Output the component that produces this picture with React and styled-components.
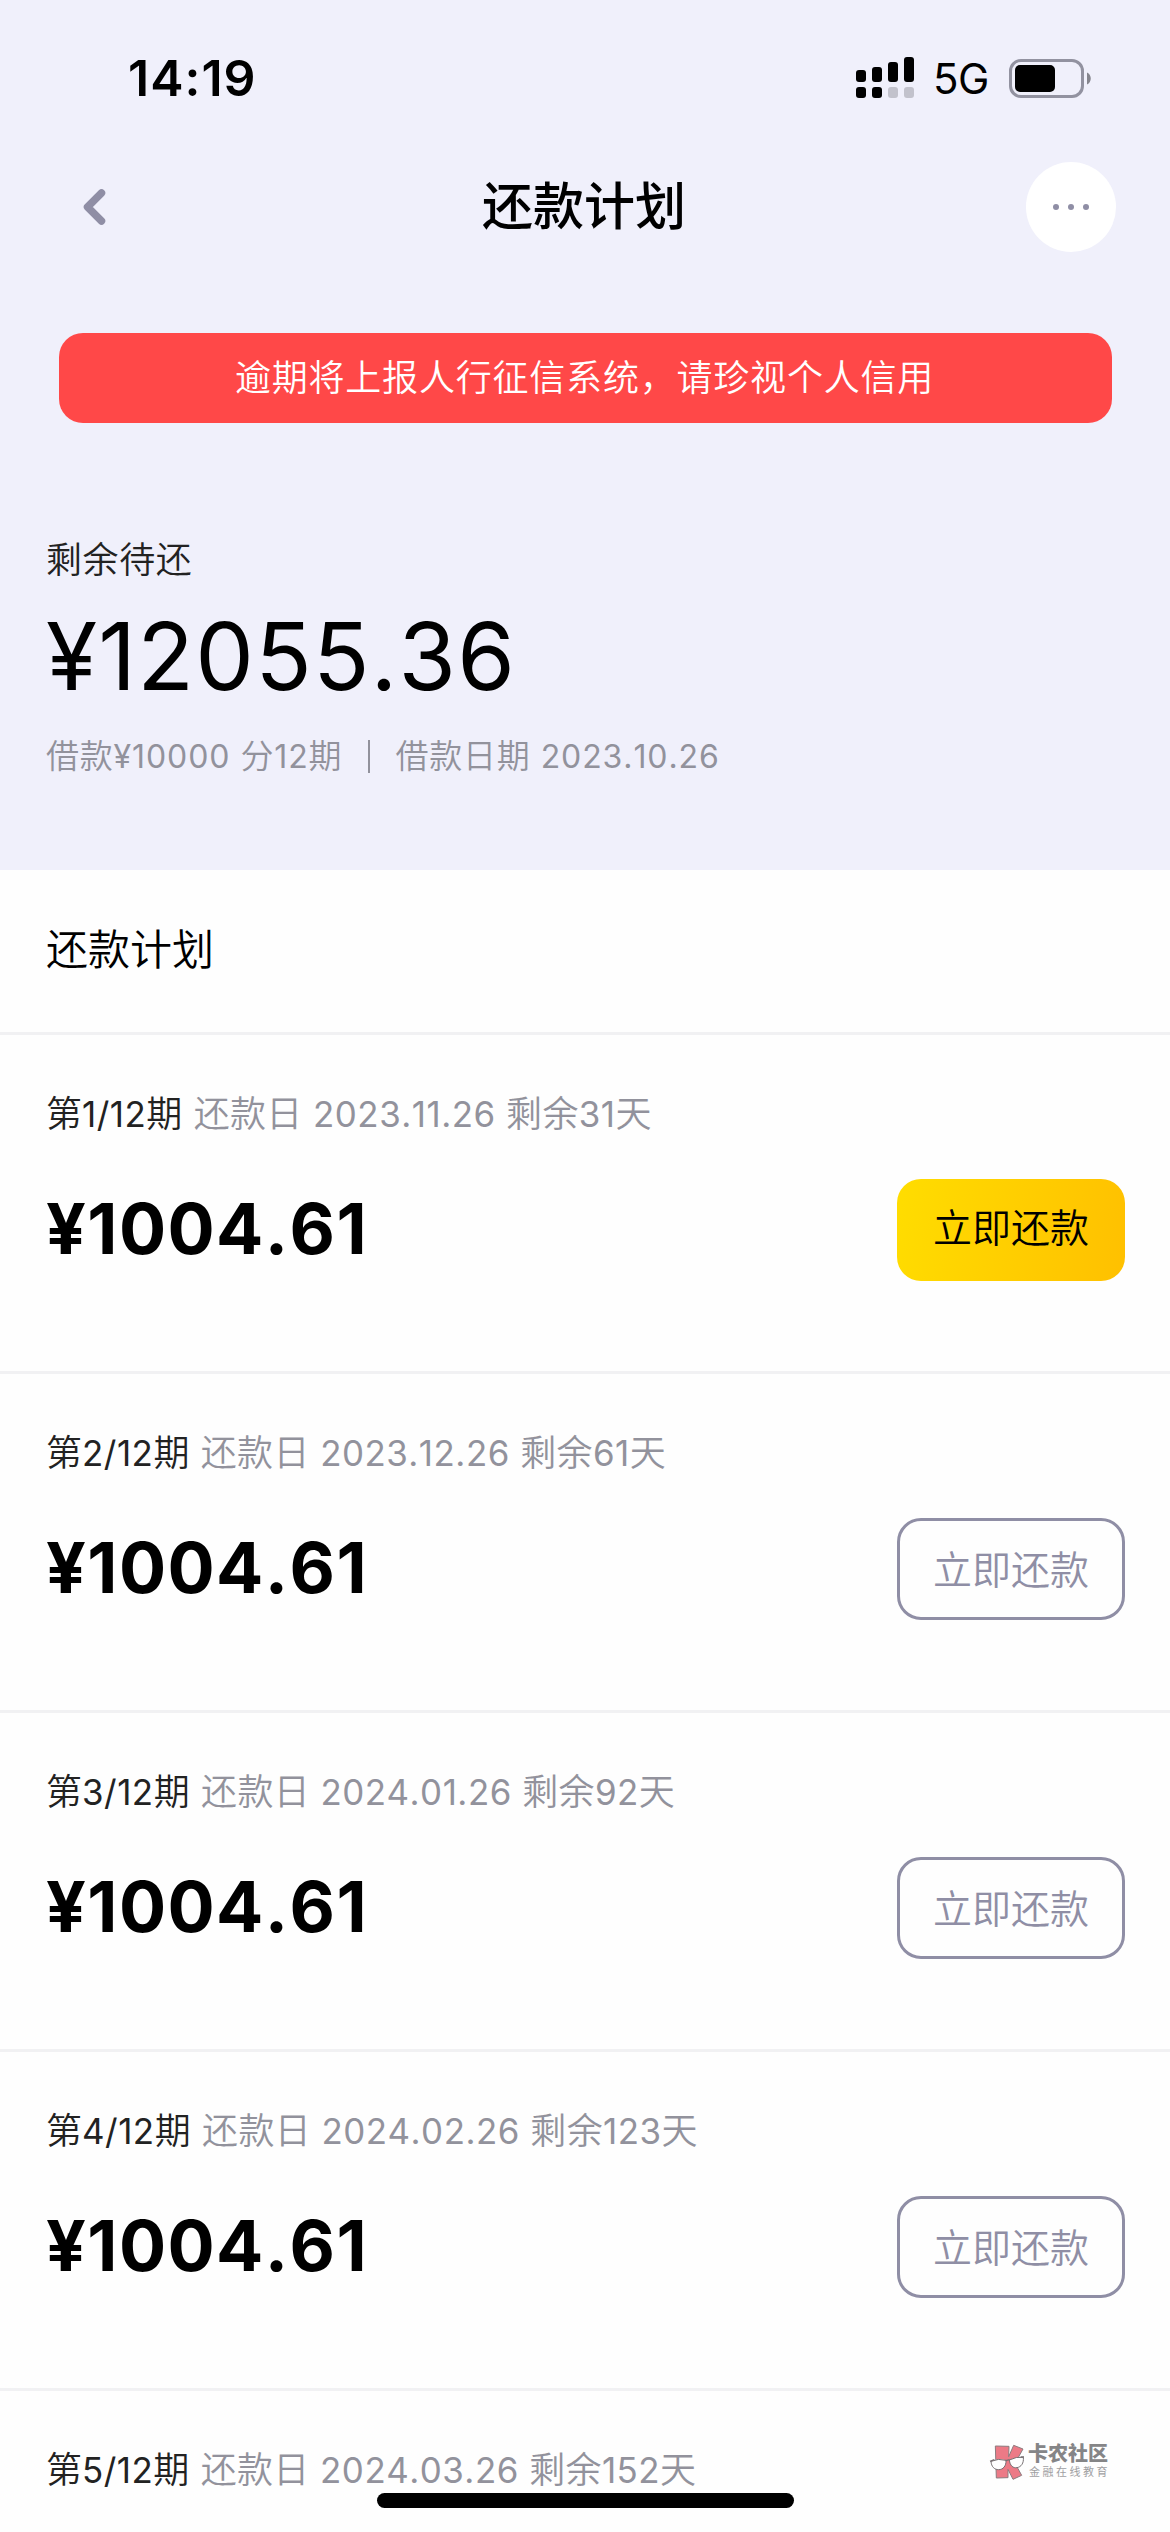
import React from "react";
import styled, { createGlobalStyle, css } from "styled-components";

const GlobalStyle = createGlobalStyle`
  * {
    box-sizing: border-box;
  }
  body {
    margin: 0;
    background: #fff;
    font-family: Inter, "Noto Sans CJK SC", sans-serif;
    font-kerning: none;
    color: #000;
  }
`;

const Screen = styled.div`
  position: relative;
  width: 1170px;
  height: 2532px;
  overflow: hidden;
  background: #fefefe;
`;

const TopArea = styled.div`
  height: 870px;
  background: #f0f0fb;
`;

const StatusBar = styled.div`
  display: flex;
  justify-content: space-between;
  align-items: center;
  height: 156px;
  padding: 0 78px 0 128px;
`;

const Time = styled.div`
  font-size: 50px;
  font-weight: 600;
  line-height: 60px;
  letter-spacing: 1px;
`;

const StatusIcons = styled.div`
  display: flex;
  align-items: center;
`;

const Network = styled.div`
  width: 95px;
  padding: 2px 0 0 19px;
  font-size: 42px;
  font-weight: 400;
  line-height: 50px;
  letter-spacing: -0.5px;
`;

const NavBar = styled.div`
  display: flex;
  justify-content: space-between;
  align-items: center;
  height: 102px;
  padding: 0 54px 0 80px;
`;

const NavSide = styled.div`
  display: flex;
  width: 120px;
  justify-content: ${(props) => (props.$end ? "flex-end" : "flex-start")};
`;

const NavTitle = styled.h1`
  margin: 0 28px 0 0;
  font-size: 51px;
  font-weight: 500;
  line-height: 60px;
`;

const MoreButton = styled.div`
  display: flex;
  justify-content: center;
  align-items: center;
  gap: 9px;
  width: 90px;
  height: 90px;
  border-radius: 50%;
  background: #fff;
`;

const Dot = styled.span`
  width: 6px;
  height: 6px;
  border-radius: 50%;
  background: #8f8ea5;
`;

const Notice = styled.div`
  display: flex;
  justify-content: center;
  align-items: center;
  width: 1053px;
  height: 90px;
  margin: 75px 0 0 59px;
  padding: 0 2px 6px 0;
  border-radius: 24px;
  background: #ff4848;
  color: #fff;
  font-size: 36px;
  font-weight: 350;
  letter-spacing: 0.8px;
`;

// digits sit a touch smaller and heavier than the chinese text around them
const Num = styled.span`
  font-size: 0.97em;
  font-weight: 400;
  letter-spacing: 0.5px;
`;

const Summary = styled.div`
  padding: 110px 46px 0;
`;

const SummaryLabel = styled.div`
  font-size: 36px;
  line-height: 54px;
  letter-spacing: 0.6px;
  font-weight: 350;
  color: #222;
`;

const SummaryAmount = styled.div`
  margin-top: 10px;
  font-size: 93px;
  line-height: 118px;
  letter-spacing: 1.2px;
`;

const SummaryInfo = styled.div`
  display: flex;
  align-items: center;
  margin-top: 17px;
  font-size: 33px;
  line-height: 48px;
  letter-spacing: 0.8px;
  font-weight: 350;
  color: #92929c;

  ${Num} {
    letter-spacing: 0.9px;
  }
`;

const InfoDivider = styled.span`
  width: 2px;
  height: 33px;
  margin: 0 25px 0 26px;
  background: #92929c;
`;

const SectionTitle = styled.h2`
  height: 165px;
  margin: 0;
  padding-left: 46px;
  border-bottom: 3px solid #f1f1f3;
  font-size: 42px;
  font-weight: 350;
  line-height: 160px;
`;

const PlanItem = styled.div`
  height: 339px;
  padding: 52px 45px 0 46px;
  border-bottom: 3px solid #f1f1f3;
`;

const PlanMeta = styled.div`
  height: 54px;
  font-size: 36px;
  line-height: 54px;
  letter-spacing: 0.3px;
  font-weight: 350;
  white-space: pre;
  color: #92929c;
`;

const Period = styled.span`
  margin-right: 1px;
  color: #222;
  letter-spacing: 0;
`;

const PlanBody = styled.div`
  display: flex;
  justify-content: space-between;
  align-items: center;
  height: 102px;
  margin-top: 38px;
`;

const PlanAmount = styled.div`
  padding-bottom: 2px;
  font-size: 70px;
  font-weight: 700;
  line-height: 84px;
  letter-spacing: 1.4px;
`;

const PayButton = styled.button`
  width: 228px;
  height: 102px;
  padding: 0 0 4px;
  border: 3px solid #8f8ea5;
  border-radius: 24px;
  background: transparent;
  color: #8f8ea5;
  font-family: inherit;
  font-size: 39px;
  font-weight: 350;

  ${(props) =>
    props.$primary &&
    css`
      padding: 0 0 11px;
      border: none;
      background: linear-gradient(100deg, #ffdd00, #ffc000);
      color: #000;
    `}
`;

const HomeIndicator = styled.div`
  position: absolute;
  left: 377px;
  top: 2493px;
  width: 417px;
  height: 15px;
  border-radius: 8px;
  background: #000;
`;

const Watermark = styled.div`
  position: absolute;
  left: 989px;
  top: 2443px;
  display: flex;
  gap: 3px;
`;

const WatermarkName = styled.div`
  font-size: 20px;
  font-weight: 900;
  line-height: 23px;
  color: #858587;
  white-space: nowrap;
`;

const WatermarkSlogan = styled.div`
  padding-left: 1px;
  font-size: 11px;
  line-height: 13px;
  letter-spacing: 2.5px;
  color: #a0a0a2;
  white-space: nowrap;
`;

const plans = [
  { period: "第1/12期", date: "2023.11.26", left: "剩余31天", amount: "¥1004.61" },
  { period: "第2/12期", date: "2023.12.26", left: "剩余61天", amount: "¥1004.61" },
  { period: "第3/12期", date: "2024.01.26", left: "剩余92天", amount: "¥1004.61" },
  { period: "第4/12期", date: "2024.02.26", left: "剩余123天", amount: "¥1004.61" },
  { period: "第5/12期", date: "2024.03.26", left: "剩余152天" },
];

const MixedText = ({ text }) =>
  text
    .split(/([\d¥./]+)/)
    .map((part, i) => (i % 2 ? <Num key={i}>{part}</Num> : part));

const SignalIcon = () => (
  <svg width="58" height="42" viewBox="0 0 58 42">
    <rect x="0" y="13" width="10" height="12" rx="3" />
    <rect x="16" y="10" width="10" height="15" rx="3" />
    <rect x="32" y="5" width="10" height="20" rx="3" />
    <rect x="48" y="0" width="10" height="25" rx="3" />
    <rect x="0" y="30" width="10" height="11" rx="3" />
    <rect x="16" y="30" width="10" height="11" rx="3" />
    <rect x="32" y="30" width="10" height="11" rx="3" fill="#c2c2cc" />
    <rect x="48" y="30" width="10" height="11" rx="3" fill="#c2c2cc" />
  </svg>
);

const BatteryIcon = () => (
  <svg width="83" height="39" viewBox="0 0 83 39">
    <rect x="1.5" y="1.5" width="72" height="36" rx="10.5" fill="none" stroke="#9292a0" strokeWidth="3" />
    <rect x="6" y="6" width="40" height="27" rx="5" />
    <path d="M78 13.5c5 2 5 10 0 12z" fill="#85858d" />
  </svg>
);

const BackIcon = () => (
  <svg width="30" height="42" viewBox="0 0 30 42">
    <path
      d="M21.5 7L7.5 21l14 14"
      fill="none"
      stroke="#8f8ea5"
      strokeWidth="7.5"
      strokeLinecap="round"
      strokeLinejoin="round"
    />
  </svg>
);

const WatermarkLogo = () => (
  <svg width="36" height="38" viewBox="12 15 108 114">
    <path
      d="M31 24L72 25L71 56L86 22L114 33L90 76L110 112L84 124L69 94L69 119L34 120Z"
      fill="#ec7a86"
      stroke="#8c7c7f"
      strokeWidth="3"
    />
    <g fill="#fefefe" stroke="#777073" strokeWidth="3">
      <path d="M18 70Q40 60 63 67C64 84 54 95 41 95S19 86 18 70Z" />
      <path d="M73 66Q94 55 115 58C117 76 108 87 96 89S75 83 73 66Z" />
      <path d="M15 70L28 65M62 68L74 65M107 57L117 57" strokeWidth="4" />
    </g>
  </svg>
);

const App = () => {
  return (
    <>
      <GlobalStyle />
      <Screen>
        <TopArea>
          <StatusBar>
            <Time>14:19</Time>
            <StatusIcons>
              <SignalIcon />
              <Network>5G</Network>
              <BatteryIcon />
            </StatusIcons>
          </StatusBar>
          <NavBar>
            <NavSide>
              <BackIcon />
            </NavSide>
            <NavTitle>还款计划</NavTitle>
            <NavSide $end>
              <MoreButton>
                <Dot />
                <Dot />
                <Dot />
              </MoreButton>
            </NavSide>
          </NavBar>
          <Notice>逾期将上报人行征信系统，请珍视个人信用</Notice>
          <Summary>
            <SummaryLabel>剩余待还</SummaryLabel>
            <SummaryAmount>¥12055.36</SummaryAmount>
            <SummaryInfo>
              <span>
                <MixedText text="借款¥10000 分12期" />
              </span>
              <InfoDivider />
              <span>
                <MixedText text="借款日期 2023.10.26" />
              </span>
            </SummaryInfo>
          </Summary>
        </TopArea>

        <SectionTitle>还款计划</SectionTitle>
        {plans.map((plan, i) => (
          <PlanItem key={plan.period}>
            <PlanMeta>
              <Period>
                <MixedText text={plan.period} />
              </Period>
              <MixedText text={` 还款日 ${plan.date} ${plan.left}`} />
            </PlanMeta>
            {plan.amount && (
              <PlanBody>
                <PlanAmount>{plan.amount}</PlanAmount>
                <PayButton $primary={i === 0}>立即还款</PayButton>
              </PlanBody>
            )}
          </PlanItem>
        ))}

        <Watermark>
          <WatermarkLogo />
          <div>
            <WatermarkName>卡农社区</WatermarkName>
            <WatermarkSlogan>金融在线教育</WatermarkSlogan>
          </div>
        </Watermark>
        <HomeIndicator />
      </Screen>
    </>
  );
};

export default App;
